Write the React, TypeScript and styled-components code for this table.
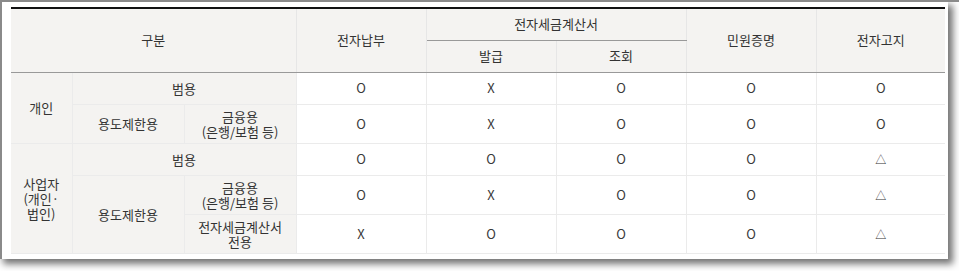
import styled, { createGlobalStyle } from "styled-components";

const GlobalStyle = createGlobalStyle`
  html, body {
    margin: 0;
    padding: 0;
    background: #ffffff;
  }
  body {
    font-family: "Noto Sans CJK KR", "Noto Sans", sans-serif;
  }
`;

const Page = styled.div`
  width: 959px;
  height: 271px;
  box-sizing: border-box;
  border-top: 2px solid #8a8a8a;
  overflow: hidden;
`;

const Panel = styled.div`
  width: 948px;
  height: 257px;
  box-sizing: border-box;
  border-left: 2px solid #8a8a8a;
  background: #ffffff;
  padding: 5px 0 0 9px;
  box-shadow: 4px 4px 7px 1px rgba(0, 0, 0, 0.55);
`;

const Table = styled.table`
  width: 934px;
  border-collapse: collapse;
  table-layout: fixed;
  border-top: 2px solid #111111;
  border-left: hidden;
  border-right: hidden;
  font-size: 13px;
  line-height: 16px;
  color: #333333;
  text-align: center;
`;

const HeadRow = styled.tr`
  height: 32px;
`;

const Th = styled.th`
  padding: 0;
  font-weight: 400;
  background: #f4f3f1;
  border: 1px solid #e6e6e6;
  border-bottom: 1px solid #999999;
  vertical-align: middle;
`;

const Row = styled.tr<{ $tall?: boolean }>`
  height: ${(p) => (p.$tall ? 39 : 32)}px;
`;

const Label = styled.td`
  padding: 0;
  background: #f4f3f1;
  border: 1px solid #ebebeb;
  vertical-align: middle;
  line-height: 15px;
`;

const Mark = styled.td`
  padding: 0;
  border: 1px solid #ebebeb;
  color: #3a3a3a;
  vertical-align: middle;
`;

const Tri = styled.span`
  font-size: 11px;
  color: #333333;
`;

type V = "O" | "X" | "△";

const Marks = ({ values }: { values: V[] }) => (
  <>
    {values.map((v, i) => (
      <Mark key={i}>{v === "△" ? <Tri>△</Tri> : v}</Mark>
    ))}
  </>
);

export default function App() {
  return (
    <Page>
      <GlobalStyle />
      <Panel>
        <Table>
          <colgroup>
            <col style={{ width: 61 }} />
            <col style={{ width: 112 }} />
            <col style={{ width: 112 }} />
            <col style={{ width: 130 }} />
            <col style={{ width: 130 }} />
            <col style={{ width: 130 }} />
            <col style={{ width: 130 }} />
            <col style={{ width: 129 }} />
          </colgroup>
          <thead>
            <HeadRow>
              <Th colSpan={3} rowSpan={2}>구분</Th>
              <Th rowSpan={2}>전자납부</Th>
              <Th colSpan={2}>전자세금계산서</Th>
              <Th rowSpan={2}>민원증명</Th>
              <Th rowSpan={2}>전자고지</Th>
            </HeadRow>
            <HeadRow>
              <Th>발급</Th>
              <Th>조회</Th>
            </HeadRow>
          </thead>
          <tbody>
            <Row>
              <Label rowSpan={2}>개인</Label>
              <Label colSpan={2}>범용</Label>
              <Marks values={["O", "X", "O", "O", "O"]} />
            </Row>
            <Row $tall>
              <Label>용도제한용</Label>
              <Label>금융용<br />(은행/보험 등)</Label>
              <Marks values={["O", "X", "O", "O", "O"]} />
            </Row>
            <Row>
              <Label rowSpan={3}>사업자<br />(개인·<br />법인)</Label>
              <Label colSpan={2}>범용</Label>
              <Marks values={["O", "O", "O", "O", "△"]} />
            </Row>
            <Row $tall>
              <Label rowSpan={2}>용도제한용</Label>
              <Label>금융용<br />(은행/보험 등)</Label>
              <Marks values={["O", "X", "O", "O", "△"]} />
            </Row>
            <Row $tall>
              <Label>전자세금계산서<br />전용</Label>
              <Marks values={["X", "O", "O", "O", "△"]} />
            </Row>
          </tbody>
        </Table>
      </Panel>
    </Page>
  );
}
